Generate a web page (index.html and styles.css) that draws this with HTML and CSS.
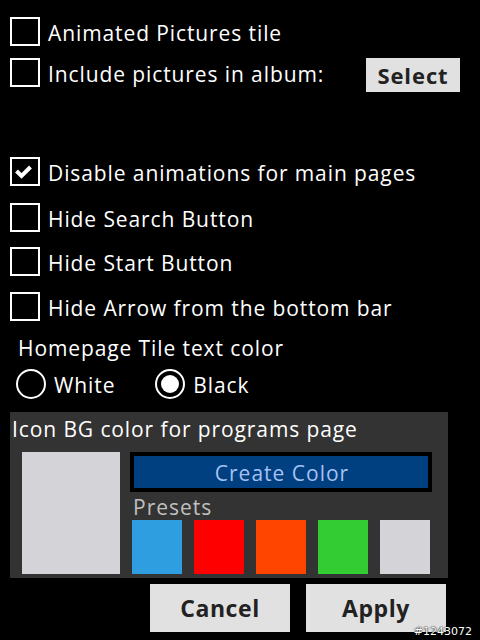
FILE: index.html
```html
<!DOCTYPE html>
<html>
<head>
<meta charset="utf-8">
<link rel="stylesheet" href="styles.css">
</head>
<body>
<div class="page">
  <div class="row r1">
    <span class="box"></span><span class="label">Animated Pictures tile</span>
  </div>
  <div class="row r2">
    <span class="box"></span><span class="label">Include pictures in album:</span>
    <span class="select">Select</span>
  </div>
  <div class="row r3">
    <span class="box checked"><svg width="30" height="29" viewBox="0 0 30 29"><path d="M6.5 14 L11.5 19 L20.5 10" fill="none" stroke="#fff" stroke-width="4"/></svg></span><span class="label">Disable animations for main pages</span>
  </div>
  <div class="row r4">
    <span class="box"></span><span class="label">Hide Search Button</span>
  </div>
  <div class="row r5">
    <span class="box"></span><span class="label">Hide Start Button</span>
  </div>
  <div class="row r6">
    <span class="box"></span><span class="label">Hide Arrow from the bottom bar</span>
  </div>
  <div class="heading">Homepage Tile text color</div>
  <div class="radios">
    <span class="radio"></span><span class="label rlabel">White</span>
    <span class="radio on"><span class="dot"></span></span><span class="label">Black</span>
  </div>
  <div class="panel">
    <div class="ptitle">Icon BG color for programs page</div>
    <div class="pbody">
      <div class="bigswatch"></div>
      <div class="right">
        <div class="create"><span>Create Color</span></div>
        <div class="presets">Presets</div>
        <div class="swatches">
          <span class="sw blue"></span>
          <span class="sw red"></span>
          <span class="sw orange"></span>
          <span class="sw green"></span>
          <span class="sw grey"></span>
        </div>
      </div>
    </div>
  </div>
  <div class="buttons">
    <span class="btn">Cancel</span>
    <span class="btn">Apply</span>
  </div>
  <div class="mark">#1243072</div>
</div>
</body>
</html>
```

FILE: styles.css
```css
html, body {
  margin: 0;
  padding: 0;
  background: #000;
}
.page {
  position: relative;
  width: 480px;
  height: 640px;
  overflow: hidden;
  background: #000;
  color: #fff;
  font-family: "Open Sans", "Noto Sans", sans-serif;
  letter-spacing: 0.9px;
}
.row {
  display: flex;
  align-items: center;
  height: 29px;
  padding-left: 10px;
}
.r1 { margin-top: 17px; }
.r2 { margin-top: 12px; }
.r3 { margin-top: 70px; }
.r4 { margin-top: 17px; }
.r5 { margin-top: 15px; }
.r6 { margin-top: 16px; }
.box {
  box-sizing: border-box;
  width: 30px;
  height: 29px;
  border: 2px solid #fff;
  flex: none;
  position: relative;
}
.box svg {
  position: absolute;
  left: -2px;
  top: -2px;
}
.label {
  font-size: 21px;
  margin-left: 8px;
  line-height: 29px;
  padding-top: 3px;
  white-space: nowrap;
}
.select {
  margin-left: auto;
  margin-right: 20px;
  width: 94px;
  height: 34px;
  margin-top: 5px;
  background: #e1e1e1;
  color: #222;
  font-weight: 700;
  font-size: 22px;
  letter-spacing: 0.9px;
  display: flex;
  align-items: center;
  justify-content: center;
}
.heading {
  margin-top: 13px;
  padding-left: 18px;
  font-size: 21px;
  line-height: 28px;
}
.radios {
  display: flex;
  align-items: center;
  margin-top: 7px;
  padding-left: 16px;
  height: 30px;
}
.radio {
  box-sizing: border-box;
  width: 30px;
  height: 30px;
  border: 2px solid #fff;
  border-radius: 50%;
  flex: none;
  display: flex;
  align-items: center;
  justify-content: center;
}
.dot {
  width: 18px;
  height: 18px;
  border-radius: 50%;
  background: #fff;
}
.rlabel {
  margin-right: 40px;
}
.panel {
  margin: 13px 0 0 10px;
  width: 438px;
  height: 166px;
  background: #333333;
  box-sizing: border-box;
  padding: 2px 0 0 2px;
}
.ptitle {
  font-size: 21px;
  line-height: 30px;
}
.pbody {
  display: flex;
  margin-top: 8px;
  padding-left: 10px;
}
.bigswatch {
  width: 98px;
  height: 122px;
  background: #d4d3d7;
  flex: none;
}
.right {
  margin-left: 10px;
  width: 302px;
}
.create {
  box-sizing: border-box;
  height: 40px;
  border: 4px solid #000;
  background: #003f80;
  color: #a4c2f2;
  font-size: 21px;
  letter-spacing: 1px;
  display: flex;
  align-items: center;
  justify-content: center;
  padding-top: 2px;
}
.create span { margin-left: 2px; }
.presets {
  margin-left: 3px;
  color: #c0c0c0;
  font-size: 21px;
  letter-spacing: 1px;
  line-height: 26px;
  margin-top: 2px;
}
.swatches {
  display: flex;
  gap: 12px;
  margin-left: 2px;
  margin-top: 0;
  letter-spacing: 0;
}
.sw {
  width: 50px;
  height: 54px;
}
.blue { background: #2f9ee0; }
.red { background: #ff0000; }
.orange { background: #ff4500; }
.green { background: #33cc33; }
.grey { background: #d4d3d7; }
.buttons {
  display: flex;
  gap: 16px;
  margin-top: 6px;
  padding-left: 150px;
}
.btn {
  width: 140px;
  height: 48px;
  background: #e1e1e1;
  color: #222;
  font-weight: 700;
  font-size: 23px;
  letter-spacing: 0.6px;
  display: flex;
  align-items: center;
  justify-content: center;
}
.mark {
  position: absolute;
  right: 8px;
  bottom: 2px;
  font-family: "DejaVu Sans", sans-serif;
  font-size: 11px;
  letter-spacing: 0;
  color: #fff;
  text-shadow: 0 0 2px #000, 0 0 1px #000;
}
```
